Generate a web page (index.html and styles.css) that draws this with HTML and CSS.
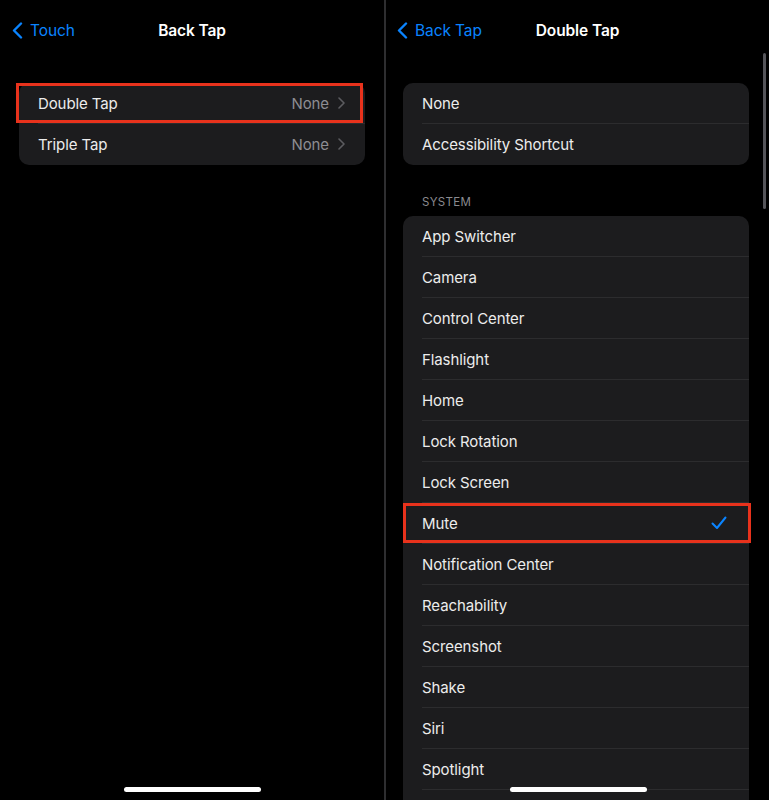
FILE: index.html
```html
<!DOCTYPE html>
<html lang="en">
<head>
<meta charset="utf-8">
<title>Back Tap</title>
<link rel="stylesheet" href="styles.css">
</head>
<body>
<div class="screens">
  <section class="panel panel-left">
    <header class="nav">
      <div class="nav-back">
        <svg class="chev-back" width="11" height="17" viewBox="0 0 11 17"><path d="M9 1.5 L2 8.5 L9 15.5" fill="none" stroke="currentColor" stroke-width="2.4" stroke-linecap="round" stroke-linejoin="round"/></svg>
        <span>Touch</span>
      </div>
      <div class="nav-title">Back Tap</div>
      <div></div>
    </header>
    <div class="content content-left">
      <div class="card">
        <div class="row highlight hl-left"><span class="label">Double Tap</span><span class="value">None<svg class="chev" width="7" height="12" viewBox="0 0 7 12"><path d="M1 1 L6 6 L1 11" fill="none" stroke="currentColor" stroke-width="1.6" stroke-linecap="round" stroke-linejoin="round"/></svg></span></div>
        <div class="row"><span class="label">Triple Tap</span><span class="value">None<svg class="chev" width="7" height="12" viewBox="0 0 7 12"><path d="M1 1 L6 6 L1 11" fill="none" stroke="currentColor" stroke-width="1.6" stroke-linecap="round" stroke-linejoin="round"/></svg></span></div>
      </div>
    </div>
    <div class="home-bar"></div>
  </section>
  <div class="divider"></div>
  <section class="panel panel-right">
    <header class="nav">
      <div class="nav-back">
        <svg class="chev-back" width="11" height="17" viewBox="0 0 11 17"><path d="M9 1.5 L2 8.5 L9 15.5" fill="none" stroke="currentColor" stroke-width="2.4" stroke-linecap="round" stroke-linejoin="round"/></svg>
        <span>Back Tap</span>
      </div>
      <div class="nav-title">Double Tap</div>
      <div></div>
    </header>
    <div class="content content-right">
      <div class="card">
        <div class="row"><span class="label">None</span></div>
        <div class="row"><span class="label">Accessibility Shortcut</span></div>
      </div>
      <div class="section-header">SYSTEM</div>
      <div class="card">
        <div class="row"><span class="label">App Switcher</span></div>
        <div class="row"><span class="label">Camera</span></div>
        <div class="row"><span class="label">Control Center</span></div>
        <div class="row"><span class="label">Flashlight</span></div>
        <div class="row"><span class="label">Home</span></div>
        <div class="row"><span class="label">Lock Rotation</span></div>
        <div class="row"><span class="label">Lock Screen</span></div>
        <div class="row highlight hl-right"><span class="label">Mute</span><svg class="check" width="16" height="14" viewBox="0 0 16 14"><path d="M1.5 7.5 L6 12 L14.5 1.5" fill="none" stroke="currentColor" stroke-width="2" stroke-linecap="round" stroke-linejoin="round"/></svg></div>
        <div class="row"><span class="label">Notification Center</span></div>
        <div class="row"><span class="label">Reachability</span></div>
        <div class="row"><span class="label">Screenshot</span></div>
        <div class="row"><span class="label">Shake</span></div>
        <div class="row"><span class="label">Siri</span></div>
        <div class="row"><span class="label">Spotlight</span></div>
        <div class="row"></div>
      </div>
    </div>
    <div class="scroll-indicator"></div>
    <div class="home-bar"></div>
  </section>
</div>
</body>
</html>
```

FILE: styles.css
```css
* { box-sizing: border-box; }
html, body {
  margin: 0;
  padding: 0;
  background: #000;
}
body {
  font-family: Inter, "Noto Sans", "Liberation Sans", sans-serif;
  color: #f2f2f2;
  width: 769px;
  height: 800px;
  overflow: hidden;
}
.screens {
  display: flex;
  height: 800px;
}
.panel {
  position: relative;
  height: 800px;
  overflow: hidden;
  background: #000;
}
.panel-left { width: 384px; }
.panel-right { width: 383px; }
.divider {
  width: 2px;
  height: 800px;
  background: #2e2e30;
}
.nav {
  height: 60px;
  display: grid;
  grid-template-columns: 1fr auto 1fr;
  align-items: center;
}
.nav-back {
  display: flex;
  align-items: center;
  gap: 7px;
  padding-left: 12px;
  color: #0a84ff;
  font-size: 15.5px;
  letter-spacing: -0.1px;
}
.panel-right .nav-back { padding-left: 11px; }
.chev-back { display: block; }
.nav-title {
  font-size: 15.5px;
  font-weight: 600;
  color: #fff;
  letter-spacing: -0.1px;
}
.content { padding-top: 23px; }
.content-left { padding-left: 19px; padding-right: 19px; }
.content-right { padding-left: 17px; padding-right: 20px; }
.card {
  background: #1c1c1e;
  border-radius: 10px;
}
.row {
  position: relative;
  height: 41px;
  display: flex;
  align-items: center;
  justify-content: space-between;
  padding: 0 19px 1px 19px;
  font-size: 15px;
  letter-spacing: -0.1px;
}
.row::before {
  content: "";
  position: absolute;
  left: 19px;
  right: 0;
  bottom: 0;
  height: 1px;
  background: #2c2c2e;
}
.row:last-child::before { display: none; }
.label { color: #ececec; }
.value {
  display: flex;
  align-items: center;
  gap: 9px;
  color: #8d8d92;
}
.chev { color: #5c5c60; display: block; margin-right: 1px; }
.check { color: #0a84ff; display: block; margin-right: 3px; }
.highlight::after {
  content: "";
  position: absolute;
  top: 0;
  bottom: 1px;
  border: 3px solid #e8321c;
}
.hl-left::after { left: -3px; right: 2px; }
.hl-right::after { left: 0; right: -2px; }
.section-header {
  padding: 30px 0 7px 19px;
  font-size: 11.5px;
  color: #8a8a8f;
  letter-spacing: 0.3px;
  line-height: 14px;
}
.scroll-indicator {
  position: absolute;
  top: 53px;
  left: 377px;
  width: 3px;
  height: 156px;
  border-radius: 2px;
  background: #55555a;
}
.home-bar {
  position: absolute;
  bottom: 8px;
  left: 50%;
  width: 137px;
  height: 5px;
  margin-left: -68px;
  border-radius: 3px;
  background: #fff;
}
```
